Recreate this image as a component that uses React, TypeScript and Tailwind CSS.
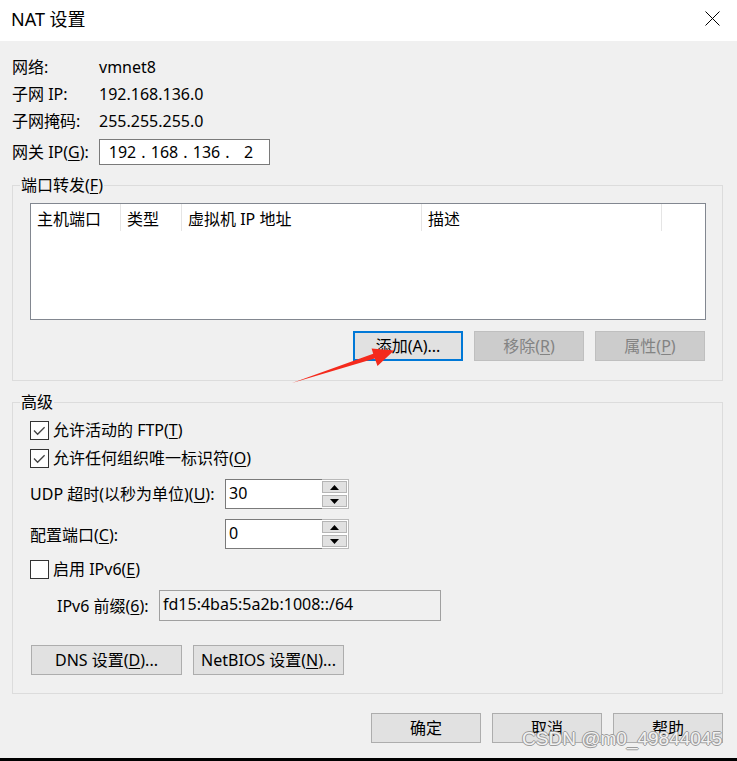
import React from "react"

function U({ children }: { children: React.ReactNode }) {
  return <span className="underline underline-offset-[2px] decoration-1">{children}</span>
}

function Btn({
  children,
  width = "w-[110px]",
  disabled,
  focused,
}: {
  children: React.ReactNode
  width?: string
  disabled?: boolean
  focused?: boolean
}) {
  if (focused) {
    return (
      <div className={`${width} h-[30px] bg-[#e1e1e1] border-2 border-[#0078d7] flex items-center justify-center`}>
        {children}
      </div>
    )
  }
  if (disabled) {
    return (
      <div className={`${width} h-[30px] bg-[#cccccc] border border-[#bfbfbf] text-[#838383] flex items-center justify-center`}>
        {children}
      </div>
    )
  }
  return (
    <div className={`${width} h-[30px] bg-[#e1e1e1] border border-[#adadad] flex items-center justify-center`}>
      {children}
    </div>
  )
}

function Check({ checked, children }: { checked?: boolean; children: React.ReactNode }) {
  return (
    <div className="flex items-center h-[20px]">
      <div className="w-[19px] h-[19px] bg-white border border-[#333333] flex items-center justify-center">
        {checked && (
          <svg width="17" height="17" viewBox="0 0 17 17">
            <path d="M3 8.5 L6.6 12.2 L13.6 5.2" fill="none" stroke="#444" strokeWidth="1.3" />
          </svg>
        )}
      </div>
      <span className="ml-[4px]">{children}</span>
    </div>
  )
}

function Spin({ value }: { value: string }) {
  return (
    <div className="flex w-[124px] h-[30px]">
      <div className="flex-1 bg-white border border-r-0 border-[#7a7a7a] pl-[3px] pb-[2px] flex items-center">
        {value}
      </div>
      <div className="w-[27px] bg-white border border-l-0 border-[#b9b9b9] flex flex-col gap-[2px] py-[1px] pr-[1px]">
        <div className="flex-1 bg-[#e1e1e1] border border-[#b5b5b5] flex items-center justify-center">
          <svg width="9" height="5" viewBox="0 0 9 5">
            <path d="M0 5 L4.5 0 L9 5Z" fill="#000" />
          </svg>
        </div>
        <div className="flex-1 bg-[#e1e1e1] border border-[#b5b5b5] flex items-center justify-center">
          <svg width="9" height="5" viewBox="0 0 9 5">
            <path d="M0 0 L4.5 5 L9 0Z" fill="#000" />
          </svg>
        </div>
      </div>
    </div>
  )
}

export default function App() {
  return (
    <div className="w-[737px] h-[761px] bg-[#f0f0f0] relative overflow-hidden flex flex-col text-[16px] text-black font-['Noto_Sans','Noto_Sans_CJK_SC',sans-serif]">
      {/* Title bar */}
      <div className="h-[41px] shrink-0 bg-white flex items-center justify-between pl-[11px] pr-[17px] pb-[4px]">
        <span className="text-[18px] leading-[22px]">NAT 设置</span>
        <svg width="15" height="15" viewBox="0 0 15 15">
          <path d="M0.5 0.5 L14.5 14.5 M14.5 0.5 L0.5 14.5" stroke="#000" strokeWidth="1" />
        </svg>
      </div>

      <div className="pl-[12px] pr-[14px] flex flex-col">
        {/* Info */}
        <div className="mt-[12px] flex flex-col">
          <div className="h-[27px] flex items-center">
            <span className="w-[87px]">网络:</span>
            <span>vmnet8</span>
          </div>
          <div className="h-[27px] flex items-center">
            <span className="w-[87px]">子网 IP:</span>
            <span>192.168.136.0</span>
          </div>
          <div className="h-[27px] flex items-center">
            <span className="w-[87px]">子网掩码:</span>
            <span>255.255.255.0</span>
          </div>
          <div className="h-[26px] mt-[5px] flex items-center">
            <span className="w-[87px]">
              网关 IP(<U>G</U>):
            </span>
            <div className="w-[171px] h-[26px] bg-white border border-[#7a7a7a] flex items-center pl-[5px] pb-[1px]">
              <span className="w-[35px] text-center">192</span>
              <span className="w-[7px] text-center">.</span>
              <span className="w-[35px] text-center">168</span>
              <span className="w-[7px] text-center">.</span>
              <span className="w-[35px] text-center">136</span>
              <span className="w-[7px] text-center">.</span>
              <span className="w-[35px] text-center">2</span>
            </div>
          </div>
        </div>

        {/* Port forwarding */}
        <fieldset className="mt-[10px] border border-[#dcdcdc] p-0 m-0 min-w-0">
          <legend className="ml-[7px] px-[1px] h-[20px] leading-[20px]">
            端口转发(<U>F</U>)
          </legend>
          <div className="flex flex-col pb-[19px]">
            <div className="mt-[8px] ml-[17px] mr-[16px] h-[117px] bg-white border border-[#828790]">
              <div className="flex h-[27px]">
                <div className="w-[90px] border-r border-[#e5e5e5] pl-[6px] pt-[3px] flex items-center">主机端口</div>
                <div className="w-[61px] border-r border-[#e5e5e5] pl-[6px] pt-[3px] flex items-center">类型</div>
                <div className="w-[240px] border-r border-[#e5e5e5] pl-[6px] pt-[3px] flex items-center">虚拟机 IP 地址</div>
                <div className="w-[240px] border-r border-[#e5e5e5] pl-[6px] pt-[3px] flex items-center">描述</div>
              </div>
            </div>
            <div className="mt-[11px] pr-[17px] flex justify-end gap-[11px]">
              <Btn focused>添加(A)...</Btn>
              <Btn disabled>
                移除(<U>R</U>)
              </Btn>
              <Btn disabled>
                属性(<U>P</U>)
              </Btn>
            </div>
          </div>
        </fieldset>

        {/* Advanced */}
        <fieldset className="mt-[11px] border border-[#dcdcdc] p-0 m-0 min-w-0">
          <legend className="ml-[7px] px-[1px] h-[20px] leading-[20px]">高级</legend>
          <div className="flex flex-col px-[17px] pb-[18px]">
            <div className="mt-[8px]">
              <Check checked>
                允许活动的 FTP(<U>T</U>)
              </Check>
            </div>
            <div className="mt-[8px]">
              <Check checked>
                允许任何组织唯一标识符(<U>O</U>)
              </Check>
            </div>
            <div className="mt-[11px] h-[30px] flex items-center">
              <span className="w-[195px]">
                UDP 超时(以秒为单位)(<U>U</U>):
              </span>
              <Spin value="30" />
            </div>
            <div className="mt-[10px] h-[30px] flex items-center">
              <span className="w-[195px] pt-[2px]">
                配置端口(<U>C</U>):
              </span>
              <Spin value="0" />
            </div>
            <div className="mt-[10px]">
              <Check>
                启用 IPv6(<U>E</U>)
              </Check>
            </div>
            <div className="mt-[11px] h-[31px] pl-[27px] flex items-center">
              <span className="w-[102px]">
                IPv6 前缀(<U>6</U>):
              </span>
              <div className="w-[282px] h-[31px] border border-[#a0a0a0] bg-[#f0f0f0] pl-[3px] pb-[4px] flex items-center">
                fd15:4ba5:5a2b:1008::/64
              </div>
            </div>
            <div className="mt-[24px] ml-[1px] flex gap-[11px]">
              <Btn width="w-[151px]">
                DNS 设置(<U>D</U>)...
              </Btn>
              <Btn width="w-[151px]">
                NetBIOS 设置(<U>N</U>)...
              </Btn>
            </div>
          </div>
        </fieldset>

        {/* Footer buttons */}
        <div className="mt-[19px] flex justify-end gap-[11px]">
          <Btn>确定</Btn>
          <Btn>取消</Btn>
          <Btn>帮助</Btn>
        </div>
      </div>

      <div className="mt-auto h-[3px] bg-black shrink-0" />

      {/* Watermark */}
      <div className="absolute right-[15px] top-[727px] text-[19px] leading-[24px] font-['Liberation_Sans',sans-serif] text-[#f2f2f2] [text-shadow:1px_0_0_#9a9a9a,-1px_0_0_#9a9a9a,0_1px_0_#9a9a9a,0_-1px_0_#9a9a9a]">
        CSDN @m0_49844045
      </div>

      {/* Red annotation arrow */}
      <svg className="absolute left-0 top-0 pointer-events-none" width="737" height="761" viewBox="0 0 737 761">
        <polygon
          points="292,383 373.2,353.7 371.6,348.5 394,350.5 377.5,366 374.8,358.5"
          fill="#f42a1c"
        />
      </svg>
    </div>
  )
}
